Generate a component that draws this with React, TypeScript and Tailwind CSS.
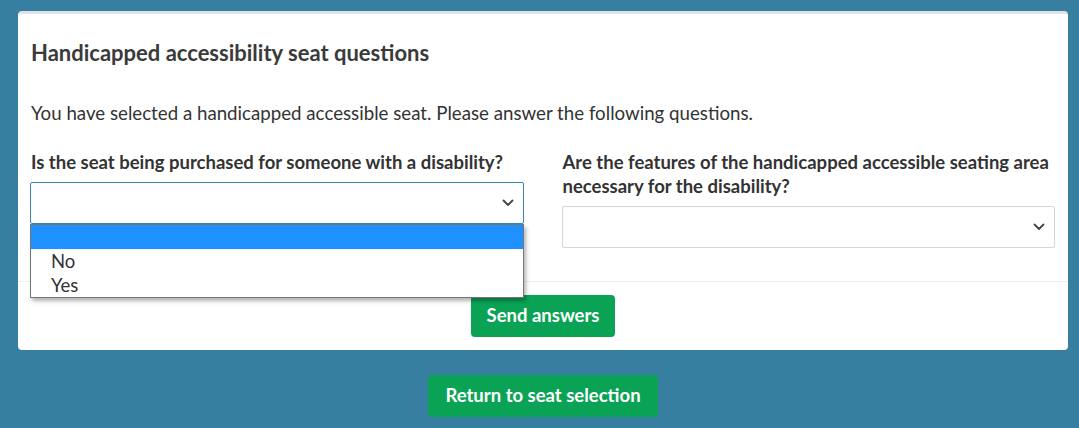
import React from "react";

const Chevron = () => (
  <svg width="12" height="8" viewBox="0 0 12 8" className="absolute right-[9px] top-1/2 -translate-y-1/2">
    <path d="M1.5 1.5 L6 6 L10.5 1.5" fill="none" stroke="#444" strokeWidth="1.8" strokeLinecap="round" strokeLinejoin="round" />
  </svg>
);

export default function App() {
  return (
    <div
      className="min-h-[428px] w-[1079px] bg-[#377fa1] pt-[11px] pl-[18px] pr-[11px] text-[#333333]"
      style={{ fontFamily: "Lato, 'Noto Sans', sans-serif" }}
    >
      <div className="rounded-[4px] bg-white border-t-[3px] border-[#dfe3e8]">
        <div className="pl-[12px] pr-[13px] pt-[25px] pb-[33px]">
          <h2 className="pl-[1px] text-[22px] font-bold leading-[28px] text-[#3a3a3a]">Handicapped accessibility seat questions</h2>
          <p className="mt-[34px] pl-[1px] text-[18.7px] leading-[24px] text-[#333]">
            You have selected a handicapped accessible seat. Please answer the following questions.
          </p>
          <div className="mt-[25px] grid grid-cols-2 gap-x-[38px]">
            <div className="flex flex-col">
              <label className="pl-[1px] text-[18.5px] font-bold leading-[24px] text-[#333]">
                Is the seat being purchased for someone with a disability?
              </label>
              <div className="relative mt-[8px]">
                <div className="relative h-[42px] rounded-[2px] border border-[#3d85b3] bg-white">
                  <Chevron />
                </div>
                <div className="absolute left-0 right-0 top-[42px] z-10 border border-[#767676] bg-white shadow-[2px_3px_4px_rgba(0,0,0,0.3)]">
                  <div className="h-[24px] bg-[#1e90ff]" />
                  <div className="pl-[20px] text-[18.5px] leading-[24px] text-[#333]">No</div>
                  <div className="pl-[20px] text-[18.5px] leading-[24px] text-[#333]">Yes</div>
                </div>
              </div>
            </div>
            <div className="flex flex-col">
              <label className="pl-[1px] text-[18.5px] font-bold leading-[24px] text-[#333]">
                Are the features of the handicapped accessible seating area necessary for the disability?
              </label>
              <div className="relative mt-[8px] h-[42px] rounded-[2px] border border-[#d3d6da] bg-white">
                <Chevron />
              </div>
            </div>
          </div>
        </div>
        <div className="flex justify-center border-t border-[#eeeeee] pt-[13px] pb-[13px]">
          <button className="h-[42px] rounded-[4px] bg-[#0aa356] px-[16px] text-[18.5px] font-bold text-white">
            Send answers
          </button>
        </div>
      </div>
      <div className="flex justify-center pt-[25px]">
        <button className="h-[42px] rounded-[4px] bg-[#0aa356] px-[17px] text-[18.5px] font-bold text-white">
          Return to seat selection
        </button>
      </div>
    </div>
  );
}
